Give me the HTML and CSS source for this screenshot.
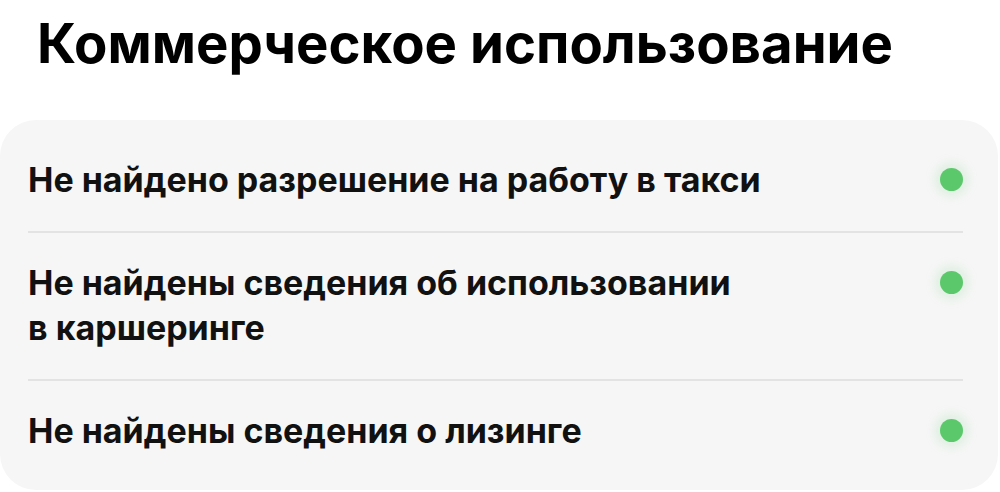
FILE: index.html
```html
<!DOCTYPE html>
<html lang="ru">
	<head>
		<meta charset="UTF-8" />
		<meta name="viewport" content="width=device-width, initial-scale=1.0" />
		<title>Коммерческое использование</title>
		<link rel="stylesheet" href="styles.css">
	</head>
	<body>
		<section class="check">
			<h1 class="check__title">Коммерческое использование</h1>
			<ul class="check__list">
				<li class="check__item">
					<span class="check__text">Не найдено разрешение на работу в такси</span>
					<span class="check__dot"></span>
				</li>
				<li class="check__item">
					<span class="check__text">Не найдены сведения об использовании<br>в каршеринге</span>
					<span class="check__dot"></span>
				</li>
				<li class="check__item">
					<span class="check__text">Не найдены сведения о лизинге</span>
					<span class="check__dot"></span>
				</li>
			</ul>
		</section>
	</body>
</html>
```

FILE: styles.css
```css
* {
	padding: 0;
	margin: 0;
	box-sizing: border-box;
}
body {
	background-color: #fff;
	font-family: Inter, "Noto Sans", sans-serif;
	color: #111;
}
.check__title {
	font-size: 54.5px;
	font-weight: 700;
	line-height: 66px;
	color: #000;
	padding: 10px 0 0 37px;
	margin-bottom: 44px;
}
.check__list {
	list-style: none;
	width: 998px;
	background-color: #f6f6f6;
	border-radius: 36px;
	padding: 10px 35px 8px 28px;
}
.check__item {
	display: flex;
	align-items: flex-start;
	justify-content: space-between;
	padding: 27px 0 29px;
	border-bottom: 2px solid #e3e3e3;
}
.check__item:last-child {
	border-bottom: none;
}
.check__text {
	font-size: 34px;
	font-weight: 700;
	line-height: 45px;
}
/* green status light, aligned to the first text line */
.check__dot {
	flex: none;
	width: 23px;
	height: 23px;
	margin-top: 11px;
	border-radius: 50%;
	background-color: #5bc86b;
	box-shadow: 0 0 12px 4px rgba(91, 200, 107, 0.18);
}
```
